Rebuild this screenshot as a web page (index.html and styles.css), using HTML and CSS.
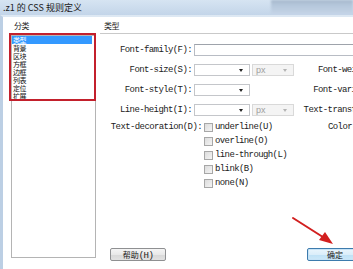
FILE: index.html
```html
<!DOCTYPE html>
<html lang="zh-CN">
<head>
    <meta charset="UTF-8">
    <title>.z1 的 CSS 规则定义</title>
    <link rel="stylesheet" href="styles.css">
</head>
<body>
    <div class="window">
        <div class="titlebar">
            <span class="title">.z1 的 CSS 规则定义</span>
            <div class="glass"></div>
        </div>

        <div class="frame">
            <div class="category">
                <div class="cat-label">分类</div>
                <div class="listbox">
                    <div class="list-item selected">类型</div>
                    <div class="list-item">背景</div>
                    <div class="list-item">区块</div>
                    <div class="list-item">方框</div>
                    <div class="list-item">边框</div>
                    <div class="list-item">列表</div>
                    <div class="list-item">定位</div>
                    <div class="list-item">扩展</div>
                </div>
            </div>

            <div class="panel">
                <div class="panel-head">类型</div>

                <div class="form-grid">
                    <div class="lbl">Font-family(F):</div>
                    <input type="text" class="textbox span-all">

                    <div class="lbl">Font-size(S):</div>
                    <div class="combo"><span class="arrow"></span></div>
                    <div class="combo disabled"><span class="val">px</span><span class="arrow"></span></div>
                    <div class="lbl-right">Font-weight(W):</div>

                    <div class="lbl">Font-style(T):</div>
                    <div class="combo"><span class="arrow"></span></div>
                    <div></div>
                    <div class="lbl-right">Font-variant(V):</div>

                    <div class="lbl">Line-height(I):</div>
                    <div class="combo"><span class="arrow"></span></div>
                    <div class="combo disabled"><span class="val">px</span><span class="arrow"></span></div>
                    <div class="lbl-right">Text-transform(R):</div>
                </div>

                <div class="decoration">
                    <div class="lbl deco-lbl">Text-decoration(D):</div>
                    <div class="checks">
                        <div class="check"><span class="box"></span>underline(U)</div>
                        <div class="check"><span class="box"></span>overline(O)</div>
                        <div class="check"><span class="box"></span>line-through(L)</div>
                        <div class="check"><span class="box"></span>blink(B)</div>
                        <div class="check"><span class="box"></span>none(N)</div>
                    </div>
                    <div class="color-lbl">Color(C):</div>
                </div>

                <div class="buttons">
                    <button class="btn btn-help">帮助<span class="mono">(H)</span></button>
                    <button class="btn btn-ok">确定</button>
                </div>
            </div>

            <!-- annotation overlays -->
            <div class="mark-box"></div>
            <svg class="mark-arrow" width="60" height="40" viewBox="0 0 60 40">
                <line x1="3" y1="2" x2="36" y2="23" stroke="#d21f1f" stroke-width="2" stroke-linecap="round"/>
                <polygon points="43,28 29,24 35,16" fill="#d21f1f"/>
            </svg>
        </div>
    </div>
</body>
</html>
```

FILE: styles.css
```css
* {
    margin: 0;
    padding: 0;
    box-sizing: border-box;
}

body {
    width: 353px;
    height: 269px;
    overflow: hidden;
    background: #ffffff;
    font-family: "Liberation Mono", "Noto Sans CJK SC", monospace;
    color: #222;
}

.window {
    width: 353px;
    height: 269px;
    display: flex;
    flex-direction: column;
    overflow: hidden;
}

.titlebar {
    height: 15px;
    display: flex;
    align-items: center;
    background: linear-gradient(180deg, #d6e4f2 0%, #c3d5e9 100%);
    padding-left: 3px;
}

.title {
    font-family: "Noto Sans CJK SC", "Noto Sans", sans-serif;
    font-size: 9px;
    line-height: 15px;
    color: #1b1b1b;
    white-space: nowrap;
}

.glass {
    margin-left: auto;
    width: 82px;
    height: 15px;
    background: linear-gradient(180deg, #a4b6ca 0%, #b4c6da 30%, #c6d6e8 100%);
    filter: blur(1px);
}

.frame {
    flex: 1;
    position: relative;
    display: flex;
    background: #ffffff;
    border-left: 3px solid #bccfe4;
    border-top: 2px solid #dde8f3;
    padding: 3px 0 8px 8px;
}

.category {
    width: 85px;
    flex-shrink: 0;
    display: flex;
    flex-direction: column;
}

.cat-label {
    font-family: "Noto Sans CJK SC", sans-serif;
    font-size: 8px;
    letter-spacing: -0.5px;
    line-height: 12px;
    height: 12px;
    padding-left: 3px;
    margin-bottom: 3px;
}

.listbox {
    flex: 1;
    margin-bottom: 3px;
    border: 1px solid #b4b4b4;
    padding: 0 3px 0 0;
    background: #fff;
}

.list-item {
    font-family: "Noto Sans CJK SC", sans-serif;
    font-size: 7px;
    letter-spacing: -0.5px;
    line-height: 8px;
    height: 8px;
    padding-left: 1px;
    color: #111;
    overflow: hidden;
}

.list-item.selected {
    background: #3399ff;
    color: #fff;
}

.panel {
    width: 300px;
    margin-left: 4px;
    display: flex;
    flex-direction: column;
    flex-shrink: 0;
}

.panel-head {
    font-family: "Noto Sans CJK SC", sans-serif;
    font-size: 8px;
    letter-spacing: -0.5px;
    line-height: 12px;
    height: 14px;
    padding-left: 4px;
    border-bottom: 1px solid #c9c9c9;
}

.form-grid {
    margin-top: 6px;
    display: grid;
    grid-template-columns: 92px 56px 42px 96px;
    grid-auto-rows: 20px;
    column-gap: 2px;
    align-items: center;
}

.lbl,
.lbl-right,
.check,
.color-lbl {
    font-size: 9px;
    letter-spacing: -0.6px;
    white-space: nowrap;
    color: #222;
}

.lbl {
    text-align: right;
}

.lbl-right {
    text-align: right;
    padding-right: 2px;
}

.span-all {
    grid-column: 2 / 5;
}

.textbox {
    height: 12px;
    width: 170px;
    border: 1px solid #b8bcc4;
    border-top-color: #9ea3ab;
    background: #fff;
    outline: none;
}

.combo {
    height: 12px;
    border: 1px solid #c4c6ca;
    background: #fff;
    display: flex;
    align-items: center;
    justify-content: space-between;
    padding: 0 6px 0 3px;
}

.combo .arrow {
    margin-left: auto;
    width: 0;
    height: 0;
    border-left: 2.5px solid transparent;
    border-right: 2.5px solid transparent;
    border-top: 3px solid #222;
}

.combo.disabled {
    background: #f4f4f4;
    border-color: #d9d9d9;
}

.combo.disabled .val {
    font-family: "Liberation Sans", sans-serif;
    font-size: 9px;
    color: #a0a0a0;
}

.combo.disabled .arrow {
    border-top-color: #b4b4b4;
}

.decoration {
    display: flex;
    align-items: flex-start;
}

.deco-lbl {
    width: 102px;
    flex-shrink: 0;
    line-height: 14px;
}

.checks {
    margin-left: 2px;
    display: flex;
    flex-direction: column;
}

.check {
    height: 14px;
    display: flex;
    align-items: center;
    gap: 2px;
}

.box {
    width: 9px;
    height: 9px;
    border: 1px solid #a7a7a7;
    background: linear-gradient(135deg, #dcdcdc 0%, #f4f4f4 100%);
}

.color-lbl {
    margin-left: 41px;
    line-height: 14px;
}

.buttons {
    margin-top: auto;
    display: flex;
    align-items: flex-end;
}

.btn {
    height: 13px;
    width: 56px;
    flex-shrink: 0;
    font-family: "Noto Sans CJK SC", sans-serif;
    font-size: 8px;
    line-height: 11px;
    color: #222;
    border: 1px solid #8f9092;
    border-radius: 2px;
    background: linear-gradient(180deg, #f5f5f5 0%, #e9e9e9 50%, #d8d8d8 51%, #e2e2e2 100%);
}

.btn .mono {
    font-family: "Liberation Mono", monospace;
    letter-spacing: -0.6px;
    font-size: 9px;
}

.btn-help {
    margin-left: 10px;
}

.btn-ok {
    margin-left: 141px;
    border-color: #3d7bad;
    box-shadow: inset 0 0 0 1px #c6e3f7;
    background: linear-gradient(180deg, #eaf5fc 0%, #dbeefa 50%, #bfe1f6 51%, #cde8f8 100%);
}

.mark-box {
    position: absolute;
    left: 6px;
    top: 16px;
    width: 87px;
    height: 68px;
    border: 2px solid #c3202c;
}

.mark-arrow {
    position: absolute;
    left: 287px;
    top: 199px;
}
```
